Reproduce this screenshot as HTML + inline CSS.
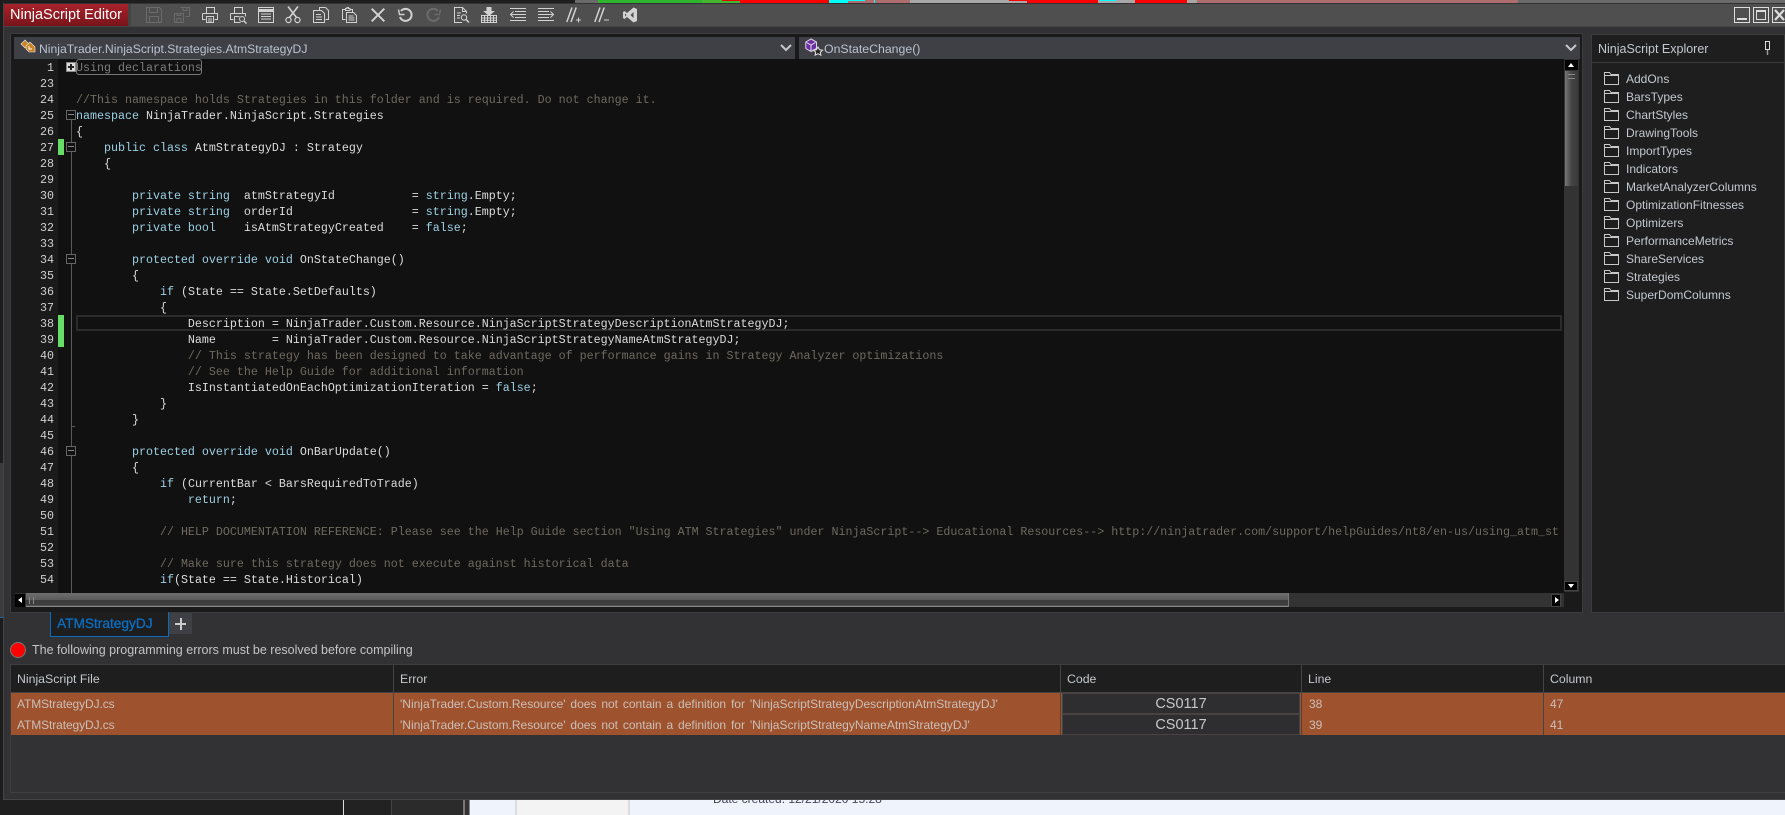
<!DOCTYPE html>
<html><head><meta charset="utf-8"><title>NinjaScript Editor</title>
<style>
html,body{margin:0;padding:0;width:1785px;height:815px;overflow:hidden;background:#1f1f1f}
*{box-sizing:border-box}
.a{position:absolute}
.s{position:absolute;font-family:"Liberation Sans",sans-serif;font-size:12px;white-space:pre;line-height:16px}
#code,#nums{position:absolute;left:0;top:1px}
#code div{position:absolute;left:76px;height:16px;line-height:16px;white-space:pre;width:1484px;overflow:hidden;font-family:"Liberation Mono",monospace;font-size:11.67px;color:#dcdcdc}
#nums div{position:absolute;left:20px;width:34px;text-align:right;height:16px;line-height:16px;font-family:"Liberation Mono",monospace;font-size:11.67px;color:#d0d0d0}
b{font-weight:normal;color:#9ccfe4}
i{font-style:normal;color:#6f6a5f}
.fold{position:absolute;left:66px;width:10px;height:10px;border:1px solid #666;background:#111}
.fold:after{content:"";position:absolute;left:1px;right:1px;top:3px;height:1px;background:#888}
.ex{color:#c3c8d0}
.h{color:#c4c8cc;font-size:12.3px}
.r{color:#cbbfb8}
.f{letter-spacing:-.1px}
.e{word-spacing:1.55px}
.cs{position:absolute;left:1062px;width:238px;background:#2e2e30;border:1px solid #4a4240;color:#c8c8c8;font:14.5px/21px "Liberation Sans",sans-serif;text-align:center}
</style></head><body>

<!-- behind-window background -->
<div class="a" style="left:344px;top:799px;width:47px;height:16px;background:#222"></div>
<div class="a" style="left:343px;top:799px;width:1px;height:16px;background:#ddd"></div>
<div class="a" style="left:391px;top:799px;width:72px;height:16px;background:#2b2b2b;border-left:1px solid #444"></div>
<div class="a" style="left:463px;top:799px;width:7px;height:16px;background:#333;border-left:2px solid #777;border-right:1px solid #888"></div>
<div class="a" style="left:470px;top:799px;width:1315px;height:16px;background:#eff3fb"></div>
<div class="a" style="left:515px;top:799px;width:115px;height:16px;background:#f3f3f3;border-left:2px solid #ddd;border-right:2px solid #ddd"></div>
<div class="s" style="left:713px;top:791px;color:#445;font-size:12px">Date created: 12/21/2020 15:28</div>

<!-- top strip -->
<div class="a" style="left:0;top:0;width:1785px;height:3px;background:#1e1e1e"></div>
<div class="a" style="left:575px;top:0;width:23px;height:3px;background:#6a6a6a"></div>
<div class="a" style="left:598px;top:0;width:104px;height:3px;background:#2db52d"></div>
<div class="a" style="left:702px;top:0;width:38px;height:3px;background:#47b52d"></div>
<div class="a" style="left:722px;top:0;width:18px;height:1px;background:#e00"></div>
<div class="a" style="left:740px;top:0;width:89px;height:3px;background:#f00"></div>
<div class="a" style="left:829px;top:0;width:19px;height:3px;background:#0ff"></div>
<div class="a" style="left:848px;top:0;width:62px;height:3px;background:#b06d6d"></div>
<div class="a" style="left:848px;top:0;width:17px;height:1px;background:#0ff"></div>
<div class="a" style="left:874px;top:0;width:1px;height:3px;background:#0ff"></div>
<div class="a" style="left:910px;top:0;width:117px;height:3px;background:#a8a8a8"></div>
<div class="a" style="left:1009px;top:0;width:18px;height:1px;background:#f00"></div>
<div class="a" style="left:1027px;top:0;width:71px;height:3px;background:#f00"></div>
<div class="a" style="left:1098px;top:0;width:37px;height:3px;background:#a8a8a8"></div>
<div class="a" style="left:1100px;top:0;width:16px;height:1px;background:#0ff"></div>
<div class="a" style="left:1135px;top:0;width:52px;height:3px;background:#f00"></div>
<div class="a" style="left:1187px;top:0;width:10px;height:3px;background:#a8a8a8"></div>
<div class="a" style="left:1197px;top:0;width:321px;height:3px;background:#b06d6d"></div>
<div class="a" style="left:1518px;top:0;width:267px;height:3px;background:#6a6a6a"></div>

<!-- window -->
<div class="a" style="left:0;top:3px;width:3px;height:796px;background:#1c1c1c"></div>
<div class="a" style="left:0;top:463px;width:3px;height:154px;background:#3a3a3a"></div>
<div class="a" style="left:0;top:617px;width:3px;height:1px;background:#0a6cbd"></div>
<div class="a" style="left:3px;top:3px;width:1782px;height:797px;background:#323234;border-left:1px solid #444;border-bottom:1px solid #444"></div>
<div class="a" style="left:4px;top:4px;width:1781px;height:23px;background:#4f4f4f;border-bottom:1px solid #444"></div>
<div class="a" style="left:4px;top:4px;width:124px;height:22px;background:linear-gradient(#a8222b,#78141a)"></div>
<div class="a" style="left:128px;top:4px;width:3px;height:22px;background:#444"></div>
<div class="s" style="left:10px;top:7px;color:#fff;font-size:14.5px">NinjaScript Editor</div>

<!-- toolbar icons -->
<svg class="a" style="left:0;top:0" width="660" height="30" fill="none" stroke="#d2d2d2" stroke-width="1">
<g stroke="#6b6b6b" transform="translate(146,7)"><path d="M.5.5h13l2 2v13H.5zM3.5.5v5h8v-5M3.5 15.5v-6h9v6"/></g>
<g stroke="#6b6b6b" transform="translate(174,7)"><path d="M6.5.5h9v9h-4M9 .5v3h4v-3M.5 6.5h9v9h-9zM3 15.5v-4h4v4M3 6.5v2h4v-2"/></g>
<g transform="translate(202,7)"><path d="M4.5 6V.5h8V6M.5 6.5h15v6h-3M3.5 12.5h-3v-6M4.5 9.5h7v6h-7zM6 12h4M6 14h4"/></g>
<g transform="translate(230,7)"><path d="M4.5 6V.5h8V6M.5 6.5h15v3M.5 6.5v6h3M4.5 9.5h5M4.5 9.5v6h6"/><circle cx="12" cy="12" r="2.5"/><path d="M14 14l2.5 2.5" stroke-width="1.5"/></g>
<g transform="translate(258,7)"><path d="M.5.5h15v15H.5zM3 7h10M3 9.5h10M3 12h10"/><path d="M.5 3.5h15" stroke-width="3" /></g>
<g transform="translate(285,6)" stroke-width="1.6"><path d="M3 .5l8.5 11M13 .5L4.5 11.5"/><circle cx="3.5" cy="14" r="2.6" stroke-width="1.2"/><circle cx="12.5" cy="14" r="2.6" stroke-width="1.2"/></g>
<g transform="translate(313,7)"><path d="M6.5 3.5V.5h6l3 3v9h-3M.5 3.5h8l3 3v9H.5zM3 7.5h5M3 10h6M3 12.5h6M8.5 3.5l3 3"/></g>
<g transform="translate(342,7)"><path d="M3.5 12.5H.5V2.5h3M10.5 5V2.5h-3M3.5 3.5V1.5h1.5V.5h1.5v1h1.5v2zM4.5 5.5h7l3 3v7h-10zM6.5 9h5M6.5 11h6M6.5 13h6"/></g>
<g transform="translate(371,8)" stroke-width="2"><path d="M.7.7l12.6 12.6M13.3.7L.7 13.3"/></g>
<g transform="translate(398,8)" stroke-width="2"><path d="M3 3a6 6 0 1 1-1 6"/><path d="M.5 1.5l1 5h5" stroke-width="1.4"/></g>
<g transform="translate(427,8)" stroke="#6b6b6b" stroke-width="2"><path d="M11 3a6 6 0 1 0 1 6"/><path d="M13.5 1.5l-1 5h-5" stroke-width="1.4"/></g>
<g transform="translate(454,7)"><path d="M8 15.5H.5V.5h8l4 4v2M8.5.5v4h4M3 6h4M3 8.5h3M3 11h3"/><circle cx="10" cy="10.5" r="2.7"/><path d="M12 12.5l3 3" stroke-width="1.5"/></g>
<g transform="translate(481,7)"><path d="M.5 8.5h15v7H.5zM3.5 8.5v7M6.5 8.5v7M9.5 8.5v7M12.5 8.5v7M.5 11h15M.5 13.3h15" /><path d="M6 .5h4v4h2.5L8 8.5 3.500 4.500H6z" fill="#d2d2d2"/></g>
<g transform="translate(510,8)"><path d="M0 .5h16M5 3.500h11M5 6.500h11M5 9.500h11M0 12.500h16M5 6.500H.5M3.500 3.500l-3 3 3 3"/></g>
<g transform="translate(538,8)"><path d="M0 .5h16M0 3.500h11M0 6.500h11M0 9.500h11M0 12.500h16M11 6.500h4.500M12.500 3.500l3 3-3 3"/></g>
<g transform="translate(566,7)" stroke-width="1.5"><path d="M.8 15L6 .5M5 15L10.200.5"/><path d="M10 13h5M12.500 10.500v5" stroke-width="1"/></g>
<g transform="translate(594,7)" stroke-width="1.5"><path d="M.8 15L6 .5M5 15L10.200.5"/><path d="M10 13h5" stroke-width="1"/></g>
<g transform="translate(622,7)"><path d="M11.500.5l3.500 1.500v12l-3.500 1.500-6.500-5.500-2.500 2-1.500-1v-6l1.500-1 2.500 2zM11.500 5l-3 3 3 3z" fill="#d2d2d2" fill-rule="evenodd" stroke="none"/><path d="M3 6.500L4.500 8 3 9.500z" fill="#4f4f4f" stroke="none"/></g>
</svg>

<!-- window buttons -->
<div class="a" style="left:1734px;top:7px;width:16px;height:16px;border:1px solid #ddd"><div class="a" style="left:2px;top:10px;width:10px;height:2px;background:#ddd"></div></div>
<div class="a" style="left:1753px;top:7px;width:16px;height:16px;border:1px solid #ddd"><div class="a" style="left:2px;top:2px;width:10px;height:10px;border:1px solid #ddd;border-top-width:2px"></div></div>
<div class="a" style="left:1772px;top:7px;width:16px;height:16px;border:1px solid #ddd"></div>
<svg class="a" style="left:1772px;top:7px" width="13" height="16" fill="none" stroke="#ddd" stroke-width="2.200"><path d="M3 3l9 10M12 3l-9 10"/></svg>

<!-- editor frame -->
<div class="a" style="left:10px;top:33px;width:1573px;height:580px;background:#1a1a1a;border:1px solid #3c3c3c"></div>
<div class="a" style="left:14px;top:37px;width:781px;height:22px;background:#3f3f46"></div>
<div class="a" style="left:799px;top:37px;width:781px;height:22px;background:#3f3f46"></div>

<svg class="a" style="left:20px;top:38px" width="18" height="18">
<path d="M1 6l4-4 4 4-4 4z" fill="#c98424" stroke="#eee" stroke-width=".6"/>
<path d="M6 8l4-4 5 5v5H9l-3-3z" fill="#c98424" stroke="#eee" stroke-width=".6"/>
<path d="M9 8v3h3" fill="none" stroke="#fff" stroke-width="1"/></svg>
<div class="s" style="left:39px;top:41px;color:#b9c3ce;font-size:12.2px">NinjaTrader.NinjaScript.Strategies.AtmStrategyDJ</div>
<svg class="a" style="left:780px;top:43px" width="12" height="10" fill="none" stroke="#c8c8c8" stroke-width="2"><path d="M1 2l5 5 5-5"/></svg>

<svg class="a" style="left:805px;top:38px" width="20" height="20" fill="none">
<path d="M6 1l5.500 3v6.500L6 13.500.8 10.500V4z" stroke="#dcd4ee" stroke-width="1" fill="#6b2fa0"/>
<path d="M1.500 4.500L6 7l4.500-2.500M6 7v6" stroke="#e8e0f4" stroke-width="1"/>
<path d="M13 9l1.500 2.800 3 .4-2.200 2 .6 3-2.900-1.500-2.900 1.500.6-3-2.200-2 3-.4z" fill="#222" stroke="#e0e0e0" stroke-width="1"/></svg>
<div class="s" style="left:824px;top:41px;color:#b9c3ce;font-size:12.3px">OnStateChange()</div>
<svg class="a" style="left:1565px;top:43px" width="12" height="10" fill="none" stroke="#c8c8c8" stroke-width="2"><path d="M1 2l5 5 5-5"/></svg>

<!-- code area -->
<div class="a" style="left:11px;top:59px;width:1553px;height:534px;background:#111"></div>
<div class="a" style="left:11px;top:59px;width:47px;height:534px;background:#1a1a1a"></div>
<div class="a" style="left:58px;top:139px;width:6px;height:16px;background:#66dd66"></div>
<div class="a" style="left:58px;top:315px;width:6px;height:32px;background:#66dd66"></div>
<div class="a" style="left:76px;top:315px;width:1486px;height:16px;border:2px solid #2b2b2b"></div>

<div class="a" style="left:71px;top:120px;width:1px;height:473px;background:#5a5a5a"></div>
<div class="a" style="left:71px;top:426px;width:4px;height:1px;background:#5a5a5a"></div>
<div class="fold" style="top:110px"></div>
<div class="fold" style="top:142px"></div>
<div class="fold" style="top:254px"></div>
<div class="fold" style="top:446px"></div>
<div class="a" style="left:66px;top:62px;width:10px;height:10px;background:#ddd;border:1px solid #888"></div>
<div class="a" style="left:68px;top:66px;width:6px;height:2px;background:#222"></div>
<div class="a" style="left:70px;top:64px;width:2px;height:6px;background:#222"></div>
<div class="a" style="left:76px;top:59px;width:126px;height:16px;border:1px solid #777;border-radius:3px"></div>

<div id="nums">
<div style="top:59px">1</div><div style="top:75px">23</div><div style="top:91px">24</div><div style="top:107px">25</div><div style="top:123px">26</div><div style="top:139px">27</div><div style="top:155px">28</div><div style="top:171px">29</div><div style="top:187px">30</div><div style="top:203px">31</div><div style="top:219px">32</div><div style="top:235px">33</div><div style="top:251px">34</div><div style="top:267px">35</div><div style="top:283px">36</div><div style="top:299px">37</div><div style="top:315px">38</div><div style="top:331px">39</div><div style="top:347px">40</div><div style="top:363px">41</div><div style="top:379px">42</div><div style="top:395px">43</div><div style="top:411px">44</div><div style="top:427px">45</div><div style="top:443px">46</div><div style="top:459px">47</div><div style="top:475px">48</div><div style="top:491px">49</div><div style="top:507px">50</div><div style="top:523px">51</div><div style="top:539px">52</div><div style="top:555px">53</div><div style="top:571px;height:15px">54</div>
</div>
<div id="code">
<div style="top:59px;color:#7c7c7c">Using declarations</div>
<div style="top:91px"><i>//This namespace holds Strategies in this folder and is required. Do not change it.</i></div>
<div style="top:107px"><b>namespace</b> NinjaTrader.NinjaScript.Strategies</div>
<div style="top:123px">{</div>
<div style="top:139px">    <b>public class</b> AtmStrategyDJ : Strategy</div>
<div style="top:155px">    {</div>
<div style="top:187px">        <b>private string</b>  atmStrategyId           = <b>string</b>.Empty;</div>
<div style="top:203px">        <b>private string</b>  orderId                 = <b>string</b>.Empty;</div>
<div style="top:219px">        <b>private bool</b>    isAtmStrategyCreated    = <b>false</b>;</div>
<div style="top:251px">        <b>protected override void</b> OnStateChange()</div>
<div style="top:267px">        {</div>
<div style="top:283px">            <b>if</b> (State == State.SetDefaults)</div>
<div style="top:299px">            {</div>
<div style="top:315px">                Description = NinjaTrader.Custom.Resource.NinjaScriptStrategyDescriptionAtmStrategyDJ;</div>
<div style="top:331px">                Name        = NinjaTrader.Custom.Resource.NinjaScriptStrategyNameAtmStrategyDJ;</div>
<div style="top:347px">                <i>// This strategy has been designed to take advantage of performance gains in Strategy Analyzer optimizations</i></div>
<div style="top:363px">                <i>// See the Help Guide for additional information</i></div>
<div style="top:379px">                IsInstantiatedOnEachOptimizationIteration = <b>false</b>;</div>
<div style="top:395px">            }</div>
<div style="top:411px">        }</div>
<div style="top:443px">        <b>protected override void</b> OnBarUpdate()</div>
<div style="top:459px">        {</div>
<div style="top:475px">            <b>if</b> (CurrentBar &lt; BarsRequiredToTrade)</div>
<div style="top:491px">                <b>return</b>;</div>
<div style="top:523px">            <i>// HELP DOCUMENTATION REFERENCE: Please see the Help Guide section "Using ATM Strategies" under NinjaScript--&gt; Educational Resources--&gt; http://ninjatrader.com/support/helpGuides/nt8/en-us/using_atm_strategies.htm</i></div>
<div style="top:555px">            <i>// Make sure this strategy does not execute against historical data</i></div>
<div style="top:571px">            <b>if</b>(State == State.Historical)</div>
</div>

<!-- vertical scrollbar -->
<div class="a" style="left:1564px;top:59px;width:15px;height:533px;background:#333"></div>
<div class="a" style="left:1565px;top:60px;width:13px;height:10px;background:#000"></div>
<div class="a" style="left:1568px;top:63px;width:0;height:0;border:3.500px solid transparent;border-bottom:4px solid #fff;border-top:0"></div>
<div class="a" style="left:1565px;top:71px;width:13px;height:115px;background:linear-gradient(90deg,#777,#444 50%,#3a3a3a)"></div>
<div class="a" style="left:1568px;top:74px;width:7px;height:5px;border-top:1px solid #888;border-bottom:1px solid #888"></div>
<div class="a" style="left:1564px;top:581px;width:14px;height:10px;background:#000;border:1px solid #444"></div>
<div class="a" style="left:1568px;top:584px;width:0;height:0;border:3.500px solid transparent;border-top:4px solid #fff;border-bottom:0"></div>
<!-- horizontal scrollbar -->
<div class="a" style="left:15px;top:593px;width:1549px;height:14px;background:#333"></div>
<div class="a" style="left:15px;top:594px;width:10px;height:13px;background:#000"></div>
<div class="a" style="left:18px;top:597px;width:0;height:0;border:3.500px solid transparent;border-right:4px solid #fff;border-left:0"></div>
<div class="a" style="left:26px;top:593px;width:1263px;height:14px;background:linear-gradient(#6e6e6e,#5a5a5a 50%,#3d3d3d 52%,#3d3d3d 90%,#888 92%);border-right:1px solid #777"></div>
<div class="a" style="left:29px;top:597px;width:5px;height:7px;border-left:1px solid #888;border-right:1px solid #888"></div>
<div class="a" style="left:1551px;top:594px;width:10px;height:13px;background:#000;border:1px solid #444"></div>
<div class="a" style="left:1555px;top:597px;width:0;height:0;border:3.500px solid transparent;border-left:4px solid #fff;border-right:0"></div>

<!-- explorer -->
<div class="a" style="left:1591px;top:34px;width:194px;height:579px;background:#1e1e1e;border:1px solid #3c3c3c"></div>
<div class="a" style="left:1592px;top:62px;width:193px;height:1px;background:#3c3c3c"></div>
<div class="s ex" style="left:1598px;top:41px;font-size:12.500px">NinjaScript Explorer</div>
<svg class="a" style="left:1762px;top:40px" width="12" height="16" fill="none" stroke="#ddd"><path d="M3.500 1.500h4v8h-4zM3 9.500h5"/><path d="M5.500 10v5" stroke="#999" stroke-width="1.500"/></svg>
<svg class="a" style="left:1604px;top:70px" width="16" height="240" fill="none" stroke="#c8c8c8">
<defs><path id="f" d="M.5 2.500V13.500H14.500V3.500H7L5.500 1.500H.5ZM.5 4.500H14.500"/></defs>
<use href="#f" y="1"/><use href="#f" y="19"/><use href="#f" y="37"/><use href="#f" y="55"/><use href="#f" y="73"/><use href="#f" y="91"/><use href="#f" y="109"/><use href="#f" y="127"/><use href="#f" y="145"/><use href="#f" y="163"/><use href="#f" y="181"/><use href="#f" y="199"/><use href="#f" y="217"/>
</svg>
<div class="s ex" style="left:1626px;top:71px">AddOns</div>
<div class="s ex" style="left:1626px;top:89px">BarsTypes</div>
<div class="s ex" style="left:1626px;top:107px">ChartStyles</div>
<div class="s ex" style="left:1626px;top:125px">DrawingTools</div>
<div class="s ex" style="left:1626px;top:143px">ImportTypes</div>
<div class="s ex" style="left:1626px;top:161px">Indicators</div>
<div class="s ex" style="left:1626px;top:179px">MarketAnalyzerColumns</div>
<div class="s ex" style="left:1626px;top:197px">OptimizationFitnesses</div>
<div class="s ex" style="left:1626px;top:215px">Optimizers</div>
<div class="s ex" style="left:1626px;top:233px">PerformanceMetrics</div>
<div class="s ex" style="left:1626px;top:251px">ShareServices</div>
<div class="s ex" style="left:1626px;top:269px">Strategies</div>
<div class="s ex" style="left:1626px;top:287px">SuperDomColumns</div>

<!-- tabs -->
<div class="a" style="left:50px;top:612px;width:119px;height:25px;background:#1e1e1e;border:1px solid #0a6cbd;border-top:0"></div>
<div class="s" style="left:57px;top:616px;color:#0a6fc2;font-size:13.7px;-webkit-text-stroke:.3px #0a6fc2">ATMStrategyDJ</div>
<div class="a" style="left:169px;top:613px;width:23px;height:21px;background:#3f3f46"></div>
<div class="a" style="left:175px;top:623px;width:11px;height:2px;background:#ccc"></div>
<div class="a" style="left:179.500px;top:618px;width:2px;height:12px;background:#ccc"></div>

<!-- error message -->
<div class="a" style="left:10px;top:642px;width:16px;height:16px;border-radius:50%;background:#f00;border:1px solid #777"></div>
<div class="s" style="left:32px;top:642px;color:#c4c4c4;font-size:12.5px">The following programming errors must be resolved before compiling</div>

<!-- table -->
<div class="a" style="left:10px;top:664px;width:1775px;height:129px;border:1px solid #3e3e3e;border-right:0"></div>
<div class="a" style="left:11px;top:665px;width:1774px;height:27px;background:#1e1e1e"></div>
<div class="a" style="left:11px;top:692px;width:1774px;height:1px;background:#444"></div>
<div class="a" style="left:11px;top:693px;width:1774px;height:42px;background:#9e532e"></div>
<div class="a" style="left:393px;top:665px;width:1px;height:70px;background:#444"></div>
<div class="a" style="left:1060px;top:665px;width:1px;height:70px;background:#444"></div>
<div class="a" style="left:1301px;top:665px;width:1px;height:70px;background:#444"></div>
<div class="a" style="left:1543px;top:665px;width:1px;height:70px;background:#444"></div>
<div class="s h" style="left:17px;top:671px">NinjaScript File</div>
<div class="s h" style="left:400px;top:671px">Error</div>
<div class="s h" style="left:1067px;top:671px">Code</div>
<div class="s h" style="left:1308px;top:671px">Line</div>
<div class="s h" style="left:1550px;top:671px">Column</div>
<div class="s r f" style="left:17px;top:696px">ATMStrategyDJ.cs</div>
<div class="s r f" style="left:17px;top:717px">ATMStrategyDJ.cs</div>
<div class="s r e" style="left:400px;top:696px">'NinjaTrader.Custom.Resource' does not contain a definition for 'NinjaScriptStrategyDescriptionAtmStrategyDJ'</div>
<div class="s r e" style="left:400px;top:717px">'NinjaTrader.Custom.Resource' does not contain a definition for 'NinjaScriptStrategyNameAtmStrategyDJ'</div>
<div class="cs" style="top:693px;height:21px">CS0117</div>
<div class="cs" style="top:714px;height:21px">CS0117</div>
<div class="s r" style="left:1309px;top:696px">38</div>
<div class="s r" style="left:1309px;top:717px">39</div>
<div class="s r" style="left:1550px;top:696px">47</div>
<div class="s r" style="left:1550px;top:717px">41</div>
</body></html>
